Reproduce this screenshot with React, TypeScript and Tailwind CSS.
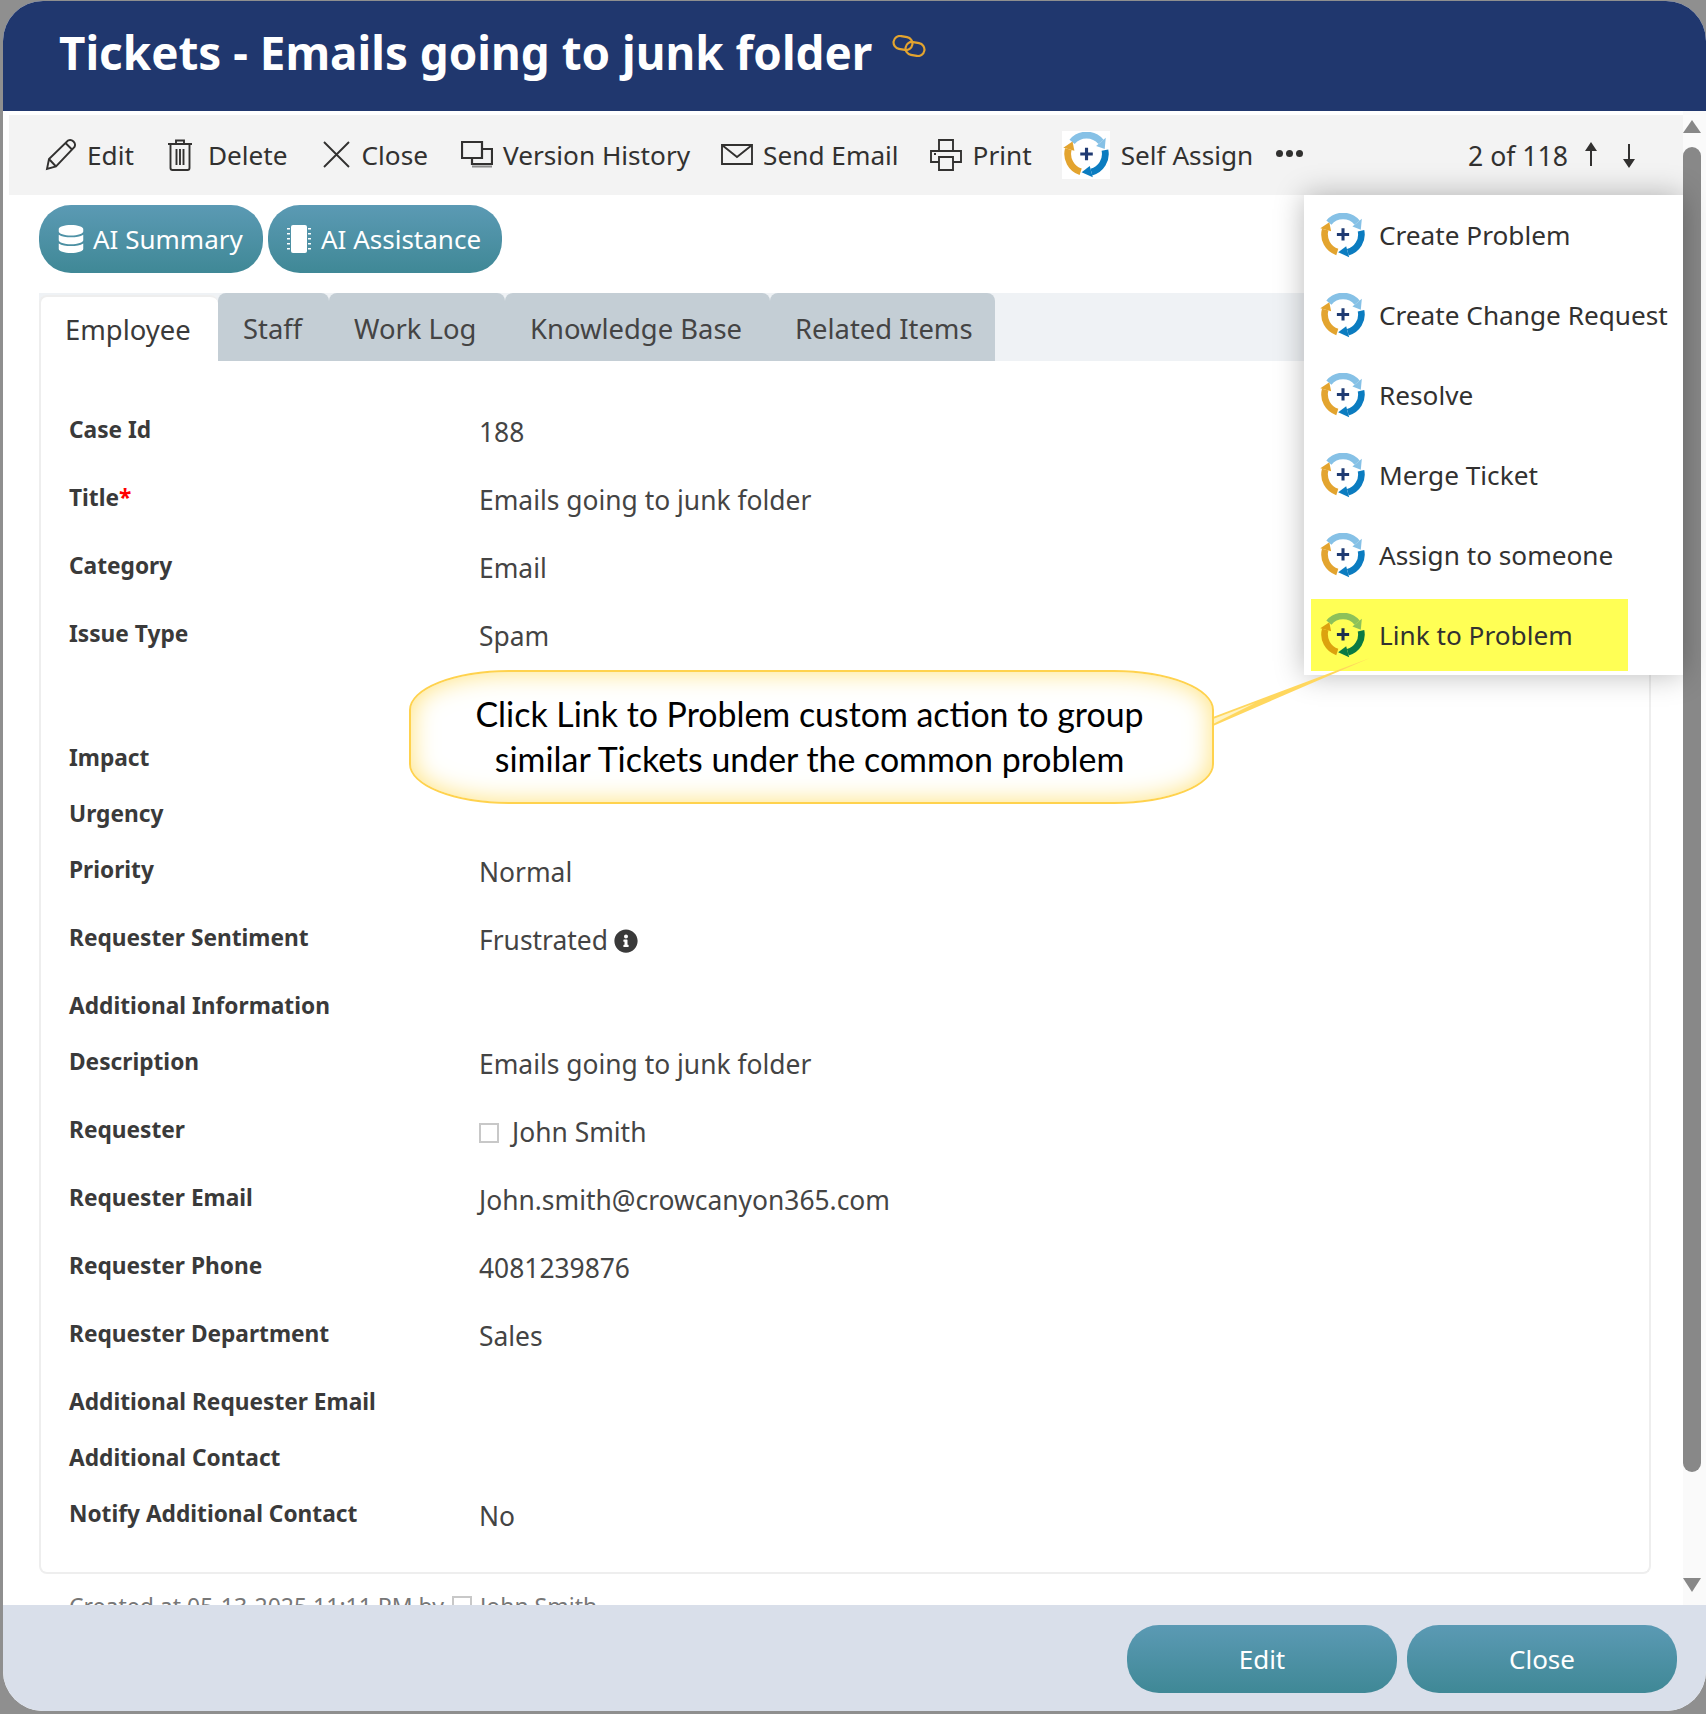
import { FaDatabase, FaInfoCircle } from "react-icons/fa";

function Logo({ green = false, className = "" }: { green?: boolean; className?: string }) {
  const top = green ? "#8dc15a" : "#86c1e6";
  const right = green ? "#0a7a43" : "#0b7cc0";
  const left = green ? "#dca20f" : "#e3a42f";
  const plus = green ? "#1c2f4f" : "#1f3a72";
  return (
    <svg viewBox="0 2 44 44" className={`shrink-0 ${className}`} fill="none">
      <path d="M8.7 11.4 A18 18 0 0 1 36.3 11.4" stroke={top} strokeWidth="6.5" />
      <polygon points="40.9,7.6 31.7,15.3 39.9,18.3" fill={top} />
      <path d="M40.1 19.3 A18 18 0 0 1 27.2 40.4" stroke={right} strokeWidth="6.5" />
      <polygon points="28.5,45.2 25.6,34.6 17.8,40.4" fill={right} />
      <path d="M16.9 40.1 A18 18 0 0 1 5.1 18.3" stroke={left} strokeWidth="6.5" />
      <polygon points="0.3,17 10.9,19.9 9.1,11" fill={left} />
      <path d="M22.5 17 V29 M16.5 23 H28.5" stroke={plus} strokeWidth="3" />
    </svg>
  );
}

function ToolItem({ icon, label, className = "" }: { icon: React.ReactNode; label: string; className?: string }) {
  return (
    <div className={`flex items-center shrink-0 ${className}`}>
      {icon}
      <span className="whitespace-nowrap mt-[2px]">{label}</span>
    </div>
  );
}

const ic = { fill: "none", stroke: "#323130", strokeWidth: 1.9 };

const rows: { label: string; value?: React.ReactNode; req?: boolean }[] = [
  { label: "Case Id", value: "188" },
  { label: "Title", value: "Emails going to junk folder", req: true },
  { label: "Category", value: "Email" },
  { label: "Issue Type", value: "Spam" },
  { label: "" },
  { label: "Impact" },
  { label: "Urgency" },
  { label: "Priority", value: "Normal" },
  {
    label: "Requester Sentiment",
    value: (
      <>
        Frustrated
        <FaInfoCircle className="ml-[6px] w-[24px] h-[24px] text-[#3a3a3a]" />
      </>
    ),
  },
  { label: "Additional Information" },
  { label: "Description", value: "Emails going to junk folder" },
  {
    label: "Requester",
    value: (
      <>
        <span className="mr-[13px] w-[20px] h-[20px] border-2 border-[#c8c8c8]" />
        John Smith
      </>
    ),
  },
  { label: "Requester Email", value: "John.smith@crowcanyon365.com" },
  { label: "Requester Phone", value: "4081239876" },
  { label: "Requester Department", value: "Sales" },
  { label: "Additional Requester Email" },
  { label: "Additional Contact" },
  { label: "Notify Additional Contact", value: "No" },
];

const menu = ["Create Problem", "Create Change Request", "Resolve", "Merge Ticket", "Assign to someone"];

const tabs = [
  { t: "Staff", w: "w-[111px]" },
  { t: "Work Log", w: "w-[176px]" },
  { t: "Knowledge Base", w: "w-[265px]" },
  { t: "Related Items", w: "w-[225px]" },
];

export default function App() {
  return (
    <div className="w-[1706px] h-[1714px] bg-[#8f8f8f] pl-[3px] pt-[1px] pb-[3px] font-['Noto_Sans','Open_Sans',sans-serif] text-[#323130] overflow-hidden">
      <div className="h-full flex flex-col rounded-[40px] overflow-hidden bg-white">
        <header className="h-[110px] shrink-0 bg-[#20376e] flex items-start pl-[56px]">
          <h1 className="text-[45.8px] leading-[62px] mt-[20px] font-bold text-white whitespace-nowrap">
            Tickets - Emails going to junk folder
          </h1>
          <svg viewBox="0 0 34 22" className="w-[34px] h-[22px] ml-[20px] mt-[34px]" fill="none" stroke="#e3a42f" strokeWidth="2.2">
            <rect x="1.5" y="1.5" width="19" height="13" rx="6.5" transform="rotate(10 11 8)" />
            <rect x="13.5" y="7.5" width="19" height="13" rx="6.5" transform="rotate(10 23 14)" />
          </svg>
        </header>

        <div className="relative flex-1 min-h-0 flex">
          <div className="flex-1 min-w-0 overflow-hidden pl-[6px]">
            <div className="mt-[4px] h-[80px] bg-[#f3f3f3] flex items-center text-[26.2px] pr-[47px]">
              <ToolItem
                className="ml-[36px]"
                label="Edit"
                icon={
                  <svg viewBox="0 0 32 33" className="w-[32px] h-[33px] mr-[10px]" {...ic}>
                    <path d="M2 31 L4 21 L23 2.5 Q26 1 28.5 3.5 Q31 6 29.5 9 L11 28.5 Z M4 21 L11 28.5 M20.5 5 L27.5 12" />
                  </svg>
                }
              />
              <ToolItem
                className="ml-[33px]"
                label="Delete"
                icon={
                  <svg viewBox="0 0 26 32" className="w-[26px] h-[32px] mr-[15px]" {...ic}>
                    <path d="M1 5 H25 M9 5 V1.5 H17 V5 M3.5 5 V29 Q3.5 31 5.5 31 H20.5 Q22.5 31 22.5 29 V5 M9.5 10 V26 M13 10 V26 M16.5 10 V26" />
                  </svg>
                }
              />
              <ToolItem
                className="ml-[35px]"
                label="Close"
                icon={
                  <svg viewBox="0 0 27 27" className="w-[27px] h-[27px] mr-[12px]" {...ic}>
                    <path d="M1 1 L26 26 M26 1 L1 26" />
                  </svg>
                }
              />
              <ToolItem
                className="ml-[33px]"
                label="Version History"
                icon={
                  <svg viewBox="0 0 32 27" className="w-[32px] h-[27px] mr-[10px]" fill="none" stroke="#323130" strokeWidth="2.2">
                    <path d="M1 1 H21 V17 H1 Z M21 8 H31 V23 H11 V17" />
                    <path d="M11 25.5 H31" stroke="#8a8a8a" />
                  </svg>
                }
              />
              <ToolItem
                className="ml-[31px]"
                label="Send Email"
                icon={
                  <svg viewBox="0 0 32 21" className="w-[32px] h-[21px] mr-[10px]" {...ic}>
                    <path d="M1 1 H31 V20 H1 Z M1 1 L16 13 L31 1" />
                  </svg>
                }
              />
              <ToolItem
                className="ml-[31px]"
                label="Print"
                icon={
                  <svg viewBox="0 0 32 32" className="w-[32px] h-[32px] mr-[11px]" {...ic}>
                    <path d="M9 12 V1 H23 V12 M9 23 H1 V12 H31 V23 H23 M9 18 H23 V31 H9 Z" />
                    <path d="M4 15 H6" />
                  </svg>
                }
              />
              <div className="ml-[30px] flex items-center shrink-0">
                <div className="w-[48px] h-[48px] bg-white flex items-center justify-center mr-[11px]">
                  <Logo className="w-[46px] h-[46px]" />
                </div>
                <span className="whitespace-nowrap mt-[2px]">Self Assign</span>
              </div>
              <div className="ml-[23px] mb-[4px] flex gap-[3px] shrink-0">
                <span className="w-[7px] h-[7px] rounded-full bg-[#323130]" />
                <span className="w-[7px] h-[7px] rounded-full bg-[#323130]" />
                <span className="w-[7px] h-[7px] rounded-full bg-[#323130]" />
              </div>
              <div className="ml-auto flex items-center shrink-0">
                <span className="whitespace-nowrap mr-[16px] mt-[4px] text-[26.6px]">2 of 118</span>
                <svg viewBox="0 0 14 24" className="w-[14px] h-[24px] mb-[2px]" fill="#323130">
                  <path d="M7 0 L13 9 H8 V24 H6 V9 H1 Z" />
                </svg>
                <svg viewBox="0 0 14 24" className="w-[14px] h-[24px] ml-[24px] mt-[2px]" fill="#323130">
                  <path d="M7 24 L13 15 H8 V0 H6 V15 H1 Z" />
                </svg>
              </div>
            </div>

            <div className="mt-[10px] ml-[30px] flex gap-[5px]">
              <button className="h-[68px] w-[224px] rounded-[32px] bg-gradient-to-b from-[#5b9ab4] to-[#3f8896] text-white text-[26px] flex items-center pl-[19px]">
                <FaDatabase className="w-[26px] h-[28px] mr-[9px]" />
                AI Summary
              </button>
              <button className="h-[68px] w-[234px] rounded-[32px] bg-gradient-to-b from-[#5b9ab4] to-[#3f8896] text-white text-[26px] flex items-center pl-[18px]">
                <svg viewBox="0 0 26 28" className="w-[26px] h-[28px] mr-[9px]" fill="#fff">
                  <rect x="5" y="0" width="16" height="28" rx="2" />
                  <path d="M1 3h3v1.5H1zM1 8h3v1.5H1zM1 13h3v1.5H1zM1 18h3v1.5H1zM1 23h3v1.5H1zM22 3h3v1.5h-3zM22 8h3v1.5h-3zM22 13h3v1.5h-3zM22 18h3v1.5h-3zM22 23h3v1.5h-3z" />
                </svg>
                AI Assistance
              </button>
            </div>

            <div className="mt-[20px] ml-[30px] w-[1612px] h-[68px] bg-[#eff2f5] flex items-stretch">
              <div className="w-[179px] mt-[2px] -mb-[2px] bg-white border-l-2 border-t-2 border-[#eeeeee] rounded-t-[8px] text-[27.4px] text-[#3a3a3a] flex items-center pl-[24px] relative z-10">
                Employee
              </div>
              <div className="flex">
                {tabs.map((t) => (
                  <div
                    key={t.t}
                    className={`${t.w} bg-[#c4ced5] rounded-t-[8px] text-[27.4px] text-[#444444] flex items-center pl-[25px] pt-[4px]`}
                  >
                    {t.t}
                  </div>
                ))}
              </div>
            </div>

            <div className="ml-[30px] w-[1612px] h-[1213px] border-2 border-t-0 border-[#eeeeee] rounded-b-[8px] pl-[28px] pt-[41px]">
              {rows.map((r, i) => (
                <div key={i} className={`flex items-start ${r.value ? "h-[68px]" : "h-[56px]"}`}>
                  <div className="w-[410px] h-[57px] flex items-center text-[22.7px] font-bold text-[#3a3a3a] whitespace-nowrap">
                    {r.label}
                    {r.req && <span className="text-[#ff0000]">*</span>}
                  </div>
                  {r.value && (
                    <div className="h-[56px] mt-[3px] flex items-center text-[26.4px] text-[#444444] whitespace-nowrap">
                      {r.value}
                    </div>
                  )}
                </div>
              ))}
            </div>

            <div className="ml-[60px] mt-[15px] flex items-center text-[23px] text-[#777777] whitespace-nowrap">
              Created at 05-13-2025 11:11 PM by
              <span className="mx-[8px] w-[20px] h-[20px] border-2 border-[#c8c8c8]" />
              John Smith
            </div>
          </div>

          <div className="w-[23px] shrink-0 bg-[#fafafa] flex flex-col items-start pl-0">
            <div className="w-[18px] mt-[9px] mb-[14px] h-[13px] flex justify-center">
              <svg viewBox="0 0 18 13" className="w-[18px] h-[13px]" fill="#888888">
                <path d="M9 0 L18 13 H0 Z" />
              </svg>
            </div>
            <div className="w-[18px] h-[1325px] rounded-[9px] bg-[#888888]" />
            <div className="w-[18px] mt-[106px] h-[14px]">
              <svg viewBox="0 0 18 14" className="w-[18px] h-[14px]" fill="#888888">
                <path d="M9 14 L18 0 H0 Z" />
              </svg>
            </div>
          </div>

          {/* custom action menu */}
          <div className="absolute left-[1301px] top-[84px] w-[379px] h-[480px] bg-white shadow-[0_0_28px_rgba(0,0,0,0.28)] text-[26.2px] z-20">
            {menu.map((m) => (
              <div key={m} className="h-[80px] flex items-center pl-[16px]">
                <Logo className="w-[45px] h-[45px] mr-[14px]" />
                <span className="whitespace-nowrap mt-[2px]">{m}</span>
              </div>
            ))}
            <div className="h-[80px] flex items-center pl-[7px]">
              <div className="w-[317px] h-[72px] bg-[#ffff55] flex items-center pl-[9px]">
                <Logo green className="w-[45px] h-[45px] mr-[14px]" />
                <span className="whitespace-nowrap mt-[2px]">Link to Problem</span>
              </div>
            </div>
          </div>

          {/* callout */}
          <svg viewBox="0 0 170 80" className="absolute left-[1207px] top-[546px] w-[170px] h-[80px] z-30">
            <polygon points="3,60 160,1 3,69" fill="#ffd75e" />
            <polygon points="3,62 45,46 3,67" fill="#fff3c4" />
          </svg>
          <div className="absolute left-[406px] top-[559px] w-[805px] h-[134px] rounded-[100px/40px] bg-white border-2 border-[#ffd24d] shadow-[inset_0_0_26px_#ffe27a] z-30 flex flex-col items-center justify-center pr-[4px] text-black text-[33.9px] leading-[45px] font-['Lato',sans-serif]">
            <div>Click Link to Problem custom action to group</div>
            <div>similar Tickets under the common problem</div>
          </div>
        </div>

        <footer className="h-[106px] shrink-0 bg-[#d9dfea] flex items-start justify-end gap-[10px] pt-[20px] pr-[29px]">
          <button className="w-[270px] h-[68px] rounded-[32px] bg-gradient-to-b from-[#5b9ab4] to-[#3f8896] text-white text-[26px]">
            Edit
          </button>
          <button className="w-[270px] h-[68px] rounded-[32px] bg-gradient-to-b from-[#5b9ab4] to-[#3f8896] text-white text-[26px]">
            Close
          </button>
        </footer>
      </div>
    </div>
  );
}
